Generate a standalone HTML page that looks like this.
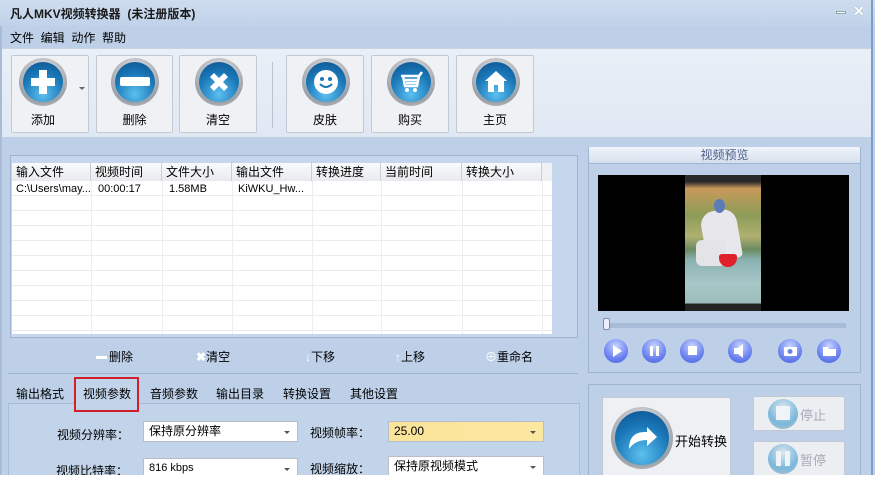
<!DOCTYPE html>
<html><head><meta charset="utf-8"><style>
*{margin:0;padding:0;box-sizing:border-box}
body{width:875px;height:492px;background:#fff;font-family:"Liberation Sans","Noto Sans CJK SC",sans-serif;font-size:12px;color:#000;position:relative;overflow:hidden}
.a{position:absolute}
#win{left:0;top:0;width:875px;height:475px;background:#bdd0e8;overflow:hidden}
.tb{background:#f0f1f4;border:1px solid #c3c9d3;border-radius:2px}
.ic{position:absolute;border-radius:50%;background:radial-gradient(circle at 50% 35%,#f4f4f4,#9aa0a8 70%,#d8d8d8);}
.ic i{position:absolute;left:4px;top:4px;right:4px;bottom:4px;border-radius:50%;background:radial-gradient(circle at 50% 80%,#5cc0f0,#1a78b8 55%,#0b4f8c)}
.lbl{position:absolute;width:100%;text-align:center;top:55px;font-size:12px}
.hd{position:absolute;top:0;height:18px;border-right:1px solid #c9ced6;background:linear-gradient(#fafafa,#e8eaee);padding-left:4px;line-height:18px}
.pc{position:absolute;border-radius:50%;width:24px;height:24px;background:radial-gradient(circle at 50% 30%,#c8d4ff,#6b82f0 60%,#4a5fd8);}
.cb{position:absolute;background:#fff;border:1px solid #b8bec8;height:21px;line-height:19px;padding-left:5px}
.cb:after{content:"";position:absolute;right:7px;top:9px;border:3px solid transparent;border-top:3px solid #555}
</style></head><body>
<div id="win" class="a">
<div class="a" style="left:0;top:0;width:875px;height:26px;background:linear-gradient(#cfdcee,#c0d2ea)"></div>
<div class="a" style="left:10px;top:5px;font-weight:bold;font-size:12px;color:#1a1a1a">凡人MKV视频转换器 &nbsp;(未注册版本)</div>
<div class="a" style="left:836px;top:11px;width:10px;height:3px;background:#fff;border:1px solid #8aa"></div>
<div class="a" style="left:853px;top:3px;color:#fff;font-size:14px;font-weight:bold;text-shadow:0 0 1px #678">✕</div>
<div class="a" style="left:10px;top:29px;font-size:12px">文件 &nbsp;编辑 &nbsp;动作 &nbsp;帮助</div>
<div class="a" style="left:2px;top:48px;width:870px;height:89px;background:linear-gradient(#e9eff7,#dfe8f3);border-top:1px solid #c8d4e4"></div>
<div class="a tb" style="left:11px;top:55px;width:78px;height:78px"><div class="ic" style="left:7px;top:2px;width:48px;height:48px"><i></i></div><svg class="a" style="left:16px;top:11px" width="30" height="30"><path d="M11 3h8v8h8v8h-8v8h-8v-8h-8v-8h8z" fill="#fff"/></svg><div class="a" style="left:67px;top:31px;border:3px solid transparent;border-top:3px solid #666"></div><div class="lbl" style="width:62px">添加</div></div>
<div class="a tb" style="left:96px;top:55px;width:77px;height:78px"><div class="ic" style="left:14px;top:2px;width:48px;height:48px"><i></i></div><div class="a" style="left:23px;top:21px;width:30px;height:9px;background:#fff;border-radius:2px"></div><div class="lbl">删除</div></div>
<div class="a tb" style="left:179px;top:55px;width:78px;height:78px"><div class="ic" style="left:15px;top:2px;width:48px;height:48px"><i></i></div><svg class="a" style="left:26px;top:13px" width="26" height="26"><path d="M4 8l4-4 5 5 5-5 4 4-5 5 5 5-4 4-5-5-5 5-4-4 5-5z" fill="#fff"/></svg><div class="lbl">清空</div></div>
<div class="a" style="left:272px;top:62px;width:1px;height:66px;background:#b8c4d4"></div>
<div class="a tb" style="left:286px;top:55px;width:78px;height:78px"><div class="ic" style="left:15px;top:2px;width:48px;height:48px"><i></i></div><svg class="a" style="left:25px;top:12px" width="28" height="28"><circle cx="14" cy="14" r="12" fill="#fff"/><circle cx="10" cy="11" r="2" fill="#1a78b8"/><circle cx="18" cy="11" r="2" fill="#1a78b8"/><path d="M8 16q6 6 12 0" stroke="#1a78b8" stroke-width="2" fill="none"/></svg><div class="lbl">皮肤</div></div>
<div class="a tb" style="left:371px;top:55px;width:78px;height:78px"><div class="ic" style="left:15px;top:2px;width:48px;height:48px"><i></i></div><svg class="a" style="left:25px;top:12px" width="28" height="28"><path d="M4 8h18l3-4M6 8l2 10h12l2-10M8 12h13M9 15h11" stroke="#fff" stroke-width="2.5" fill="none"/><circle cx="10" cy="22" r="2" fill="#fff"/><circle cx="18" cy="22" r="2" fill="#fff"/></svg><div class="lbl">购买</div></div>
<div class="a tb" style="left:456px;top:55px;width:78px;height:78px"><div class="ic" style="left:15px;top:2px;width:48px;height:48px"><i></i></div><svg class="a" style="left:25px;top:12px" width="28" height="28"><path d="M14 3l11 10h-3v11h-6v-7h-4v7h-6v-11h-3z" fill="#fff"/></svg><div class="lbl">主页</div></div>
<div class="a" style="left:10px;top:155px;width:568px;height:183px;border:1px solid #9fb4d0;background:#c6d6ec"></div>
<div class="a" style="left:12px;top:163px;width:540px;height:171px;background:#fff;background-image:repeating-linear-gradient(#fff 0 14px,#e8ebef 14px 15px);background-position:0 18px"></div>
<div class="a" style="left:12px;top:163px;width:540px;height:18px;background:#eef0f3">
<div class="hd" style="left:0;width:79px">输入文件</div><div class="hd" style="left:79px;width:71px">视频时间</div><div class="hd" style="left:150px;width:70px">文件大小</div><div class="hd" style="left:220px;width:80px">输出文件</div><div class="hd" style="left:300px;width:69px">转换进度</div><div class="hd" style="left:369px;width:81px">当前时间</div><div class="hd" style="left:450px;width:80px">转换大小</div></div>
<div class="a" style="left:91px;top:181px;width:1px;height:153px;background:#eceef1;box-shadow:71px 0 #eceef1,141px 0 #eceef1,221px 0 #eceef1,290px 0 #eceef1,371px 0 #eceef1,451px 0 #eceef1"></div>
<div class="a" style="left:16px;top:183px;font-size:11px">C:\Users\may...</div>
<div class="a" style="left:98px;top:183px;font-size:11px">00:00:17</div>
<div class="a" style="left:169px;top:183px;font-size:11px">1.58MB</div>
<div class="a" style="left:238px;top:183px;font-size:11px">KiWKU_Hw...</div>
<div class="a" style="left:96px;top:348px;font-size:12px"><span style="display:inline-block;width:11px;height:3px;background:#fff;vertical-align:middle;margin-right:2px"></span>删除</div>
<div class="a" style="left:196px;top:348px;font-size:12px"><span style="color:#fff;font-weight:bold">✖</span>清空</div>
<div class="a" style="left:305px;top:348px;font-size:12px"><span style="color:#fff;font-weight:bold">↓</span>下移</div>
<div class="a" style="left:395px;top:348px;font-size:12px"><span style="color:#fff;font-weight:bold">↑</span>上移</div>
<div class="a" style="left:485px;top:348px;font-size:12px"><span style="color:#fff">⊕</span>重命名</div>
<div class="a" style="left:8px;top:373px;width:570px;height:1px;background:#9fb4d0"></div>
<div class="a" style="left:16px;top:385px">输出格式</div>
<div class="a" style="left:150px;top:385px">音频参数</div>
<div class="a" style="left:216px;top:385px">输出目录</div>
<div class="a" style="left:283px;top:385px">转换设置</div>
<div class="a" style="left:350px;top:385px">其他设置</div>
<div class="a" style="left:8px;top:403px;width:572px;height:80px;background:#c2d4ea;border:1px solid #a8bcd6"></div>
<div class="a" style="left:74px;top:377px;width:65px;height:35px;border:2px solid #d21f2a;background:#c2d4ea"></div>
<div class="a" style="left:83px;top:385px">视频参数</div>
<div class="a" style="left:57px;top:426px;font-size:12px">视频分辨率：</div>
<div class="cb" style="left:143px;top:421px;width:155px">保持原分辨率</div>
<div class="a" style="left:310px;top:424px;font-size:12px">视频帧率：</div>
<div class="cb" style="left:388px;top:421px;width:156px;background:linear-gradient(90deg,#f8e49a,#fbe7a0);">25.00</div>
<div class="a" style="left:56px;top:462px;font-size:12px">视频比特率：</div>
<div class="cb" style="left:143px;top:458px;width:155px;font-size:11px">816 kbps</div>
<div class="a" style="left:310px;top:460px;font-size:12px">视频缩放：</div>
<div class="cb" style="left:388px;top:456px;width:156px">保持原视频模式</div>
<div class="a" style="left:588px;top:147px;width:273px;height:226px;border:1px solid #9fb4d0;background:#bdd0e8"></div>
<div class="a" style="left:589px;top:147px;width:271px;height:17px;background:linear-gradient(#f0f4fa,#d6e0ee);border-bottom:1px solid #9fb4d0;text-align:center;color:#4b5f88;line-height:16px">视频预览</div>
<div class="a" style="left:598px;top:175px;width:251px;height:136px;background:#000"></div>
<div class="a" style="left:685px;top:175px;width:76px;height:136px;background:linear-gradient(#2a2a2a 0 5%,#c89a5a 10%,#8c9c58 30%,#b0b070 45%,#6a8a60 55%,#8ab0b0 62%,#a8c8c8 80%,#9cbcbc 94%,#222 95%)"></div>
<div class="a" style="left:703px;top:210px;width:36px;height:50px;background:#e8e8ec;border-radius:14px 14px 4px 4px;transform:rotate(-10deg)"></div>
<div class="a" style="left:696px;top:240px;width:30px;height:26px;background:#e4e4e8;border-radius:6px"></div>
<div class="a" style="left:714px;top:199px;width:11px;height:14px;background:#5a7cb8;border-radius:50%"></div>
<div class="a" style="left:719px;top:254px;width:18px;height:13px;background:#e0202a;border-radius:3px 3px 10px 10px"></div>
<div class="a" style="left:603px;top:323px;width:243px;height:5px;background:#a8bcd8"></div>
<div class="a" style="left:603px;top:318px;width:7px;height:12px;background:#eef;border:1px solid #889;border-radius:2px"></div>
<div class="pc" style="left:604px;top:339px"></div><div class="pc" style="left:642px;top:339px"></div><div class="pc" style="left:680px;top:339px"></div><div class="pc" style="left:728px;top:339px"></div><div class="pc" style="left:778px;top:339px"></div><div class="pc" style="left:817px;top:339px"></div>
<svg class="a" style="left:604px;top:339px" width="240" height="24"><path d="M9 6l9 6-9 6z" fill="#fff"/><path d="M46 7h3v10h-3zM52 7h3v10h-3z" fill="#fff"/><rect x="84" y="7" width="9" height="9" fill="#fff"/><path d="M130 9h4l5-4v14l-5-4h-4z" fill="#fff"/><rect x="180" y="8" width="13" height="9" rx="1" fill="#fff"/><circle cx="186" cy="12.5" r="2.5" fill="#6b82f0"/><path d="M219 8h5l1 2h7v7h-13z" fill="#fff"/></svg>
<div class="a" style="left:588px;top:384px;width:273px;height:100px;border:1px solid #9fb4d0;background:#bdd0e8"></div>
<div class="a tb" style="left:602px;top:397px;width:129px;height:90px;background:#eef0f3"></div>
<div class="ic" style="left:611px;top:407px;width:62px;height:62px"><i></i></div>
<svg class="a" style="left:621px;top:417px" width="42" height="42"><path d="M8 32q0-18 18-17v-5l10 10-10 9v-6q-12 0-18 9z" fill="#fff"/></svg>
<div class="a" style="left:675px;top:431px;font-size:13px">开始转换</div>
<div class="a tb" style="left:753px;top:396px;width:92px;height:35px;background:#eceef1"></div>
<div class="a" style="left:768px;top:399px;width:30px;height:30px;border-radius:50%;background:radial-gradient(circle at 50% 30%,#dfe8ee,#7ab8dc 60%,#b8c0c8)"></div>
<div class="a" style="left:776px;top:406px;width:14px;height:14px;background:#eef4f8"></div>
<div class="a" style="left:800px;top:405px;color:#aab;font-size:13px">停止</div>
<div class="a tb" style="left:753px;top:441px;width:92px;height:40px;background:#eceef1"></div>
<div class="a" style="left:768px;top:444px;width:30px;height:30px;border-radius:50%;background:radial-gradient(circle at 50% 30%,#dfe8ee,#7ab8dc 60%,#b8c0c8)"></div>
<div class="a" style="left:776px;top:451px;width:5px;height:15px;background:#eef4f8;box-shadow:9px 0 #eef4f8"></div>
<div class="a" style="left:800px;top:450px;color:#aab;font-size:13px">暂停</div>
<div class="a" style="left:871px;top:0;width:2px;height:475px;background:#7e9cc8"></div>
<div class="a" style="left:0;top:26px;width:2px;height:449px;background:#a8bcd8"></div>
</div>
</body></html>
